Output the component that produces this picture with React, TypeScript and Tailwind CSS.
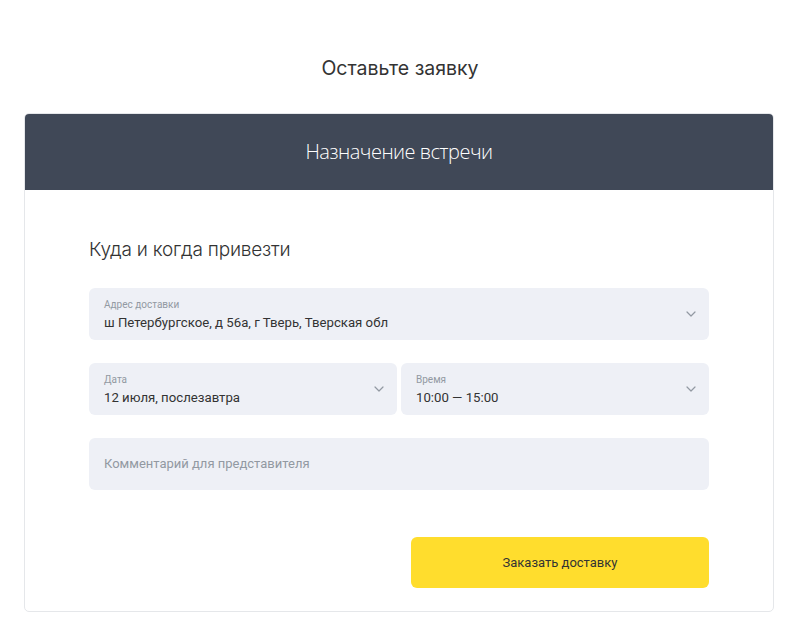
import React from "react";

const Chevron = () => (
  <svg width="10" height="6" viewBox="0 0 10 6" fill="none" className="shrink-0">
    <path d="M1 1l4 4 4-4" stroke="#9299a2" strokeWidth="1.2" strokeLinecap="round" strokeLinejoin="round" />
  </svg>
);

function Field({ label, value, chevron }: { label: string; value: string; chevron?: boolean }) {
  return (
    <div className="flex h-[52px] items-center rounded-[6px] bg-[#eef0f6] pl-[15px] pr-[13px]">
      <div className="flex flex-1 flex-col pt-[2px]">
        <span className="text-[10px] leading-[12px] text-[#9299a2]">{label}</span>
        <span className="mt-[4px] text-[13.2px] leading-[16px] text-[#333]">{value}</span>
      </div>
      {chevron && <Chevron />}
    </div>
  );
}

export default function App() {
  return (
    <div className="min-h-[623px] bg-white font-['Roboto','Noto_Sans',sans-serif]">
      <div className="pt-[54px] text-center font-['Inter',sans-serif] text-[19.5px] leading-[28px] text-[#333]">Оставьте заявку</div>
      <div className="ml-[24px] mt-[31px] w-[750px] overflow-hidden rounded-[5px] border border-[#e5e7ea]">
        <div className="flex h-[76px] items-center justify-center bg-[#404857] font-['Open_Sans',sans-serif] text-[20px] font-light tracking-[-0.5px] text-white">
          Назначение встречи
        </div>
        <div className="px-[64px] pb-[23px] pt-[46px]">
          <div className="font-['Inter',sans-serif] text-[19px] font-light leading-[28px] tracking-[-0.2px] text-[#333]">Куда и когда привезти</div>
          <div className="mt-[24px]">
            <Field label="Адрес доставки" value="ш Петербургское, д 56а, г Тверь, Тверская обл" chevron />
          </div>
          <div className="mt-[23px] grid grid-cols-2 gap-[4px]">
            <Field label="Дата" value="12 июля, послезавтра" chevron />
            <Field label="Время" value="10:00 — 15:00" chevron />
          </div>
          <div className="mt-[23px] flex h-[52px] items-center rounded-[6px] bg-[#eef0f6] px-[15px] text-[13px] text-[#9299a2]">
            Комментарий для представителя
          </div>
          <div className="mt-[47px] flex justify-end">
            <button className="h-[51px] w-[298px] rounded-[6px] bg-[#ffdd2d] text-[13px] text-[#333]">
              Заказать доставку
            </button>
          </div>
        </div>
      </div>
    </div>
  );
}
